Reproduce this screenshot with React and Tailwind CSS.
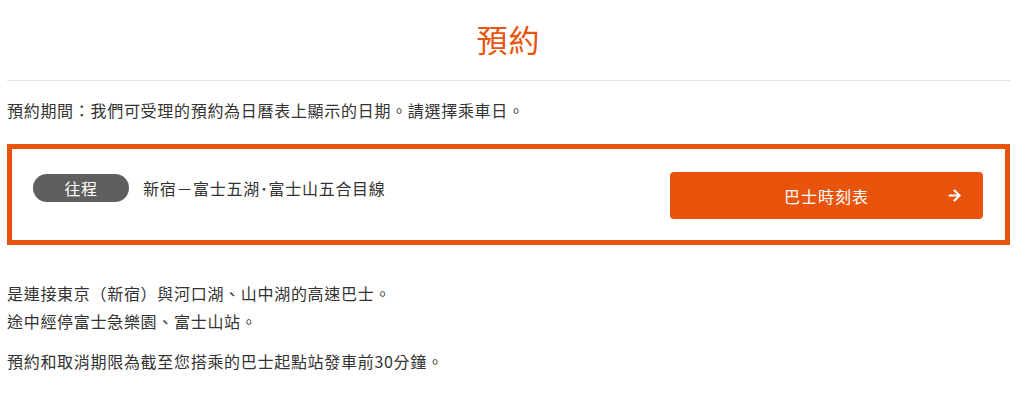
import { ArrowRight } from 'lucide-react';

const font = 'font-["Noto_Sans_CJK_TC","Noto_Sans",sans-serif]';

const App = () => (
  <div className={`min-h-screen bg-white pl-[7px] pr-[14px] text-[#333] ${font}`}>
    <header className="pt-[14px] pb-[16px] border-b border-[#e3e3e3] text-center">
      <h1 className="text-[31px] leading-[50px] text-[#e9540d] tracking-[1px]">預約</h1>
    </header>

    <p className="mt-[17px] text-[16px] leading-[24px] tracking-[0.7px]">
      預約期間：我們可受理的預約為日曆表上顯示的日期。請選擇乘車日。
    </p>

    <section className="mt-[22px] border-[5px] border-[#e9540d] h-[101px] pl-[21px] pr-[22px] flex items-center justify-between">
      <div className="flex items-center gap-[14px] self-start mt-[25px]">
        <span className="w-[96px] h-[28px] rounded-full bg-[#5f5f5f] text-white text-[16px] flex items-center justify-center tracking-[0.5px]">
          往程
        </span>
        <span className="text-[16px] tracking-[0.7px]">新宿－富士五湖･富士山五合目線</span>
      </div>
      <button className="w-[313px] h-[47px] mt-[2px] rounded-[4px] bg-[#e9540d] text-white text-[16px] tracking-[1px] relative flex items-center justify-center">
        巴士時刻表
        <ArrowRight size={17} strokeWidth={3} className="absolute right-[20px]" />
      </button>
    </section>

    <div className="mt-[34px] text-[16px] tracking-[0.7px]">
      <p className="leading-[28px]">是連接東京（新宿）與河口湖、山中湖的高速巴士。</p>
      <p className="leading-[28px]">途中經停富士急樂園、富士山站。</p>
      <p className="mt-[12px] leading-[28px]">預約和取消期限為截至您搭乘的巴士起點站發車前30分鐘。</p>
    </div>
  </div>
);

export default App;
